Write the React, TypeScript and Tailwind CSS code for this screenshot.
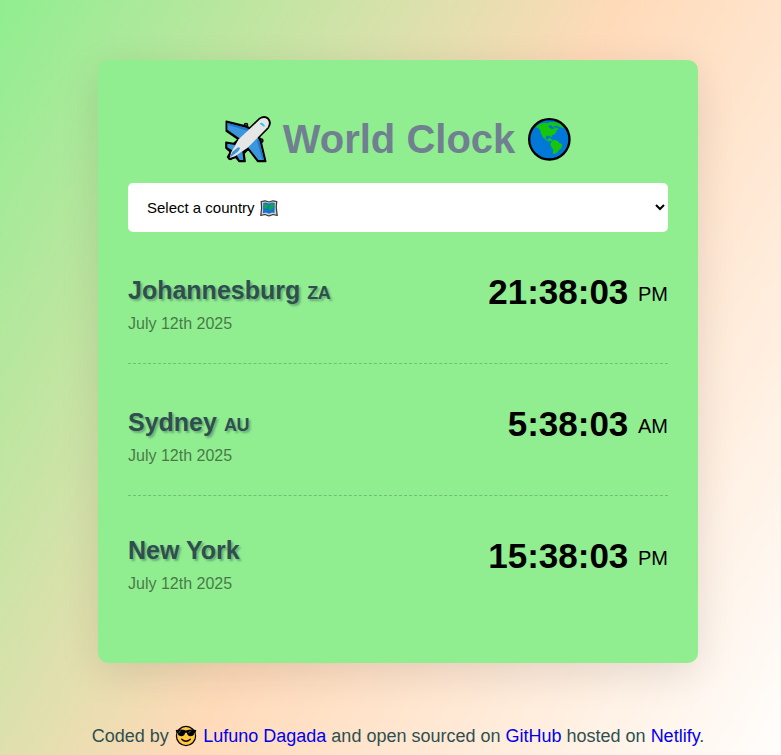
import React from "react";

function Airplane() {
  return (
    <svg viewBox="34 38 150 150" className="-mt-0.5 h-[50px] w-[50px] overflow-visible">
      <g strokeLinejoin="round" strokeLinecap="round">
        <circle cx="109" cy="74" r="5" fill="#555" stroke="#000" strokeWidth="4" />
        <circle cx="155" cy="121" r="5" fill="#555" stroke="#000" strokeWidth="4" />
        <path d="M50 63L108 77L126 86L148 108L154 124L168 183L144 183L116 146L103 159L106 183L88 183L76 168L62 177L54 170L63 155L49 143L49 126L72 130L86 117L50 92Z" fill="#000" stroke="#000" strokeWidth="5" />
        <path d="M60 173L65 155L89 118L151 58Q164 49 173 57Q182 66 173 80L112 141L76 168Z" fill="#000" stroke="#000" strokeWidth="12" />
        <path d="M53 68L108 82L126 92L96 118L53 88Z M142 108L150 124L163 179L146 179L110 134Z" fill="#3a96dd" />
        <path d="M53 68L108 82L122 89L118 93L53 73Z M146 116L150 124L163 179L159 179L142 122Z" fill="#2176c9" />
        <path d="M53 130L76 134L70 151L53 141Z M80 163L98 153L101 179L90 179Z" fill="#3a96dd" />
        <path d="M60 173L65 155L87 117L151 57Q164 49 173 57Q182 66 174 81L113 143L76 168Z" fill="#e6e6e6" />
        <path d="M60 172L68 155L83 142Q90 139 91 143Q90 149 84 154Z" fill="#3a96dd" />
        <path d="M151 69Q157 63 166 76L163 79L151 71Z" fill="#28c7ef" />
      </g>
    </svg>
  );
}

function Globe() {
  return (
    <svg viewBox="75 38 150 150" className="-mt-0.5 h-[50px] w-[50px] overflow-visible">
      <circle cx="148" cy="117" r="60.5" fill="#0078d7" stroke="#000" strokeWidth="7" />
      <path d="M107 80Q119 68 134 67L140 69L152 65Q171 65 182 72L191 84L178 80L170 76L160 77L166 82L174 82L175 87L170 90L167 98L160 104L155 105L154 112L149 106L139 106L136 114L140 118L147 116L146 111L154 116L158 118L156 122L150 121L147 124L137 119L128 111L123 99L120 90L115 84Z" fill="#16c60c" />
      <path d="M145 76L155 75L158 80L166 83L156 87L148 82Z" fill="#0078d7" />
      <path d="M155 122L164 118L174 122L178 128L187 132L184 143L177 149L171 157L162 162L158 159L160 148L154 140L151 133Z" fill="#16c60c" />
    </svg>
  );
}

function MapIcon() {
  return (
    <svg viewBox="0 0 18 17" className="h-[17px] w-[18px]">
      <path d="M1.2 1.5L5 .8L9 2L13 .8L16.8 1.5L16.2 7L17.2 15.5L13 14.5L9 16L5 14.5L.8 15.5L1.6 8Z" fill="#d5d0cc" stroke="#333" strokeWidth="1.2" strokeLinejoin="round" />
      <path d="M3.2 3L6 2.4L9 3.4L12 2.4L14.8 3L14.5 13L12 12.5L9 13.8L6 12.5L3 13.2Z" fill="#0f75cf" />
      <path d="M4 4.5L7.5 4L8.5 6L7 8L5.5 9L4 7ZM9.5 5L12 3.5L14 4.5L13.5 8L11.5 9L10.5 11.5L9 8.5Z" fill="#16a34e" />
    </svg>
  );
}

function CoolFace() {
  return (
    <svg viewBox="0 0 22 22" className="mr-[1.5px] ml-[1px] inline-block h-[22px] w-[22px] align-[-5px]">
      <circle cx="11" cy="11" r="9.6" fill="#ffc83d" stroke="#000" strokeWidth="1.2" />
      <path d="M.7 5Q6 3.7 11 5.5Q16 3.7 21.3 5L20.7 7.2L19.3 8.2Q18.8 11.2 15.5 11.2Q12.4 11.2 11.9 7.8H10.1Q9.6 11.2 6.5 11.2Q3.2 11.2 2.7 8.2L1.3 7.2Z" fill="#000" />
      <path d="M3.5 7.8L5.7 5.8M13.5 8L15.7 5.8" stroke="#777" strokeWidth="1" />
      <path d="M6.7 14.2Q11 18.2 15.3 14.2" fill="none" stroke="#000" strokeWidth="1.3" strokeLinecap="round" />
    </svg>
  );
}

type City = { name: string; code?: string; time: string; period: string };

const cities: City[] = [
  { name: "Johannesburg", code: "ZA", time: "21:38:03", period: "PM" },
  { name: "Sydney", code: "AU", time: "5:38:03", period: "AM" },
  { name: "New York", time: "15:38:03", period: "PM" },
];

function CityRow({ name, code, time, period }: City) {
  return (
    <div className="flex h-[132px] justify-between border-b border-dashed border-black/20 last:border-b-0">
      <div className={code ? "pt-[43px]" : "pt-[39px]"}>
        <h2 className="h-[30px] text-[25px] leading-[30px] font-bold whitespace-nowrap text-[#2f4f4f] [text-shadow:2px_2px_2px_rgba(47,79,79,0.4)]">
          {name}{" "}
          {code && <span className="text-[18px] leading-none tracking-[-0.5px]">{code}</span>}
        </h2>
        <div className="mt-[9px] text-base leading-5 opacity-50">July 12th 2025</div>
      </div>
      <div className="flex gap-[9.7px] pt-10 text-[35px] leading-10 font-bold">
        <span>{time}</span>
        <small className="pt-0.5 text-xl leading-10 font-normal">{period}</small>
      </div>
    </div>
  );
}

export default function App() {
  return (
    <div className="h-[755px] w-full overflow-hidden font-['Liberation_Sans',Arial,sans-serif] text-black">
      <div className="flex h-[771px] w-[796px] flex-col items-center bg-[linear-gradient(120deg,#90ee90_0%,#ffdab9_50%,#fff_100%)] pt-[60px]">
        <main className="h-[603px] w-[600px] rounded-[10px] bg-[#90ee90] px-[30px] pt-14 shadow-[0_10px_40px_rgba(0,0,0,0.11)]">
          <h1 className="flex h-[46px] items-center justify-center gap-[11px] text-[40px] leading-[46px] font-bold text-[#708090]">
            <Airplane />
            <span className="relative left-px">World Clock</span>
            <Globe />
          </h1>
          <button className="mt-[21px] flex h-[49px] w-full items-center rounded-[5px] bg-white pr-[3px] pl-[19px] text-left text-[15px]">
            <span className="pt-0.5">Select a country</span>
            <span className="ml-[5px] pt-px"><MapIcon /></span>
            <svg viewBox="0 0 10 8" className="mb-px ml-auto h-2 w-2.5">
              <path d="M1 2L5 6L9 2" fill="none" stroke="#000" strokeWidth="2" />
            </svg>
          </button>
          <div>
            {cities.map((city) => (
              <CityRow key={city.name} {...city} />
            ))}
          </div>
        </main>
        <footer className="mt-[61px] text-lg leading-6 whitespace-nowrap text-[#2f4f4f]">
          Coded by <CoolFace /> <a className="text-[#0000ee]">Lufuno Dagada</a> and open sourced on{" "}
          <a className="text-[#0000ee]">GitHub</a> hosted on <a className="text-[#0000ee]">Netlify</a>.
        </footer>
      </div>
    </div>
  );
}
